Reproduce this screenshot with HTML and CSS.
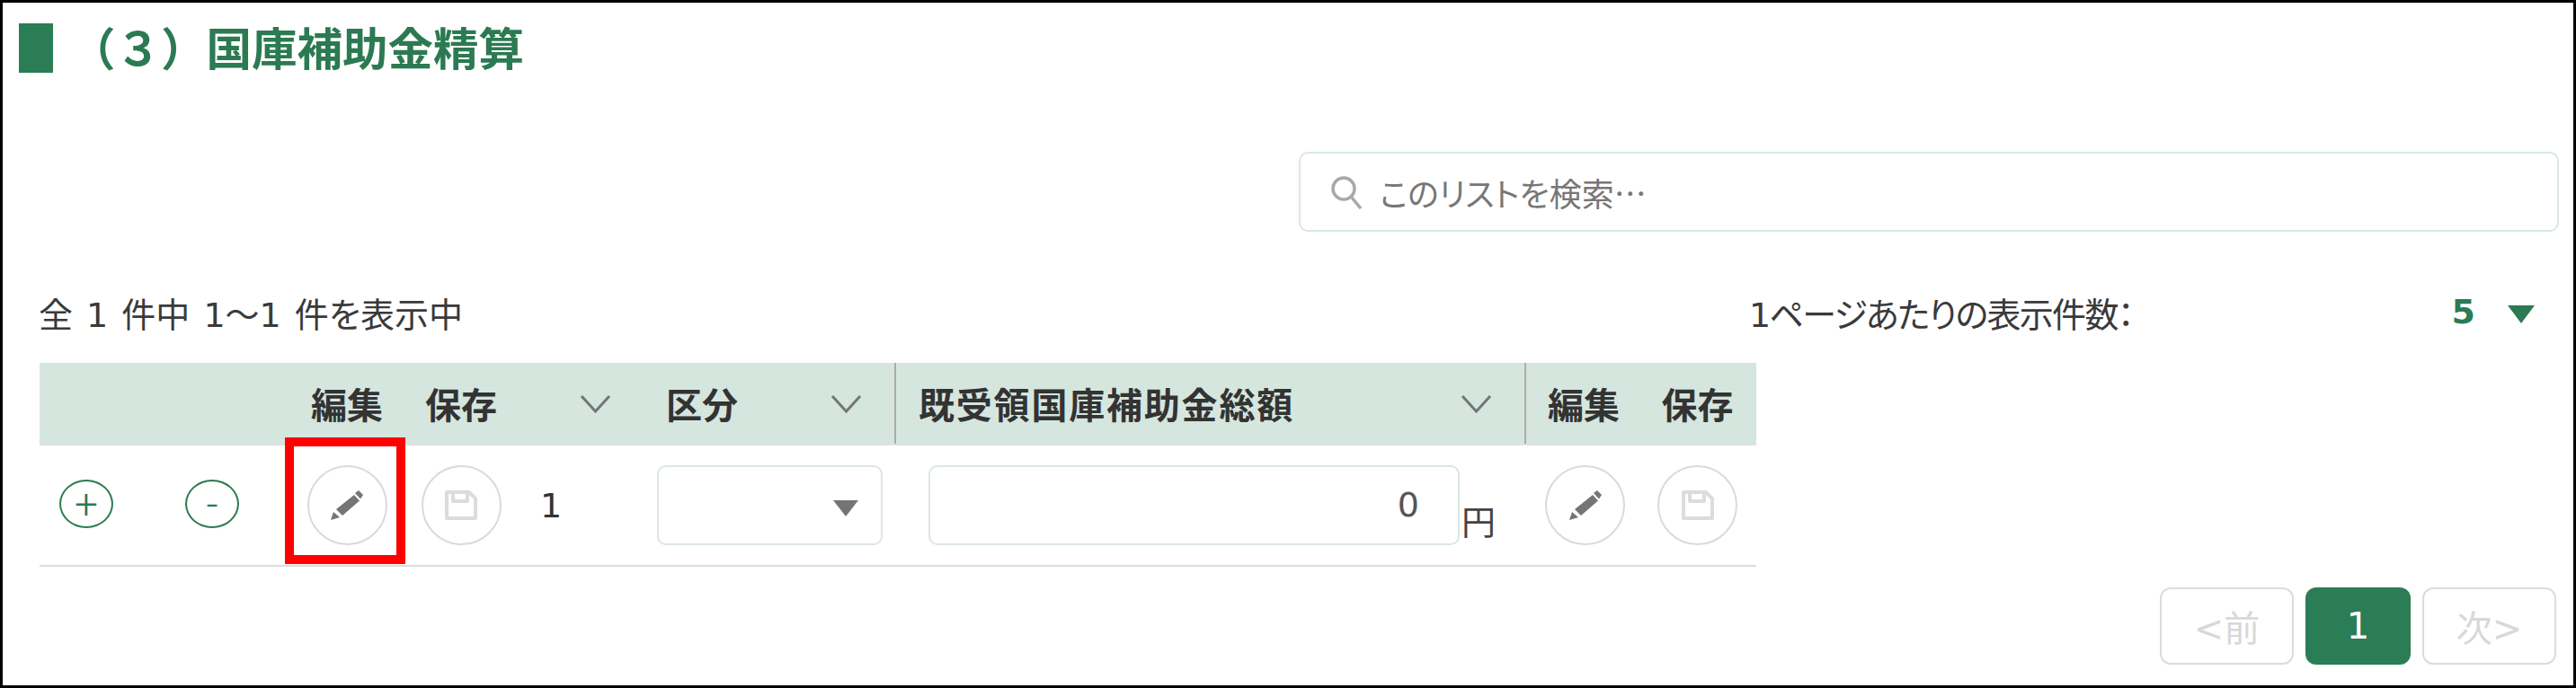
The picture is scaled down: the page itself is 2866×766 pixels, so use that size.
FILE: index.html
```html
<!DOCTYPE html>
<html lang="ja">
<head>
<meta charset="utf-8">
<title>国庫補助金精算</title>
<link rel="stylesheet" href="styles.css">
</head>
<body>
<main class="frame">
  <h2 class="title"><span class="title-mark"></span><span class="title-text">（３）国庫補助金精算</span></h2>

  <div class="search-row">
    <div class="search">
      <svg class="search-icon" viewBox="0 0 36 38"><circle cx="14" cy="15" r="12"/><path d="M23 25 L33 37"/></svg>
      <span>このリストを検索…</span>
    </div>
  </div>

  <div class="meta">
    <span class="meta-count">全 1 件中 1～1 件を表示中</span>
    <div class="per-page">
      <span class="per-page-label">1ページあたりの表示件数：</span>
      <div class="per-page-value"><span>5</span><i class="tri tri-green"></i></div>
    </div>
  </div>

  <table class="grid">
    <colgroup>
      <col class="c-plus"><col class="c-minus"><col class="c-edit"><col class="c-save"><col class="c-no"><col class="c-kind"><col class="c-amount"><col class="c-edit2"><col class="c-save2">
    </colgroup>
    <thead>
      <tr>
        <th></th>
        <th></th>
        <th class="center">編集</th>
        <th class="center">保存</th>
        <th><div class="th-sort th-sort-end"><svg class="chev" viewBox="0 0 35 21"><path d="M2 2 L17.500 19 L33 2"/></svg></div></th>
        <th><div class="th-sort"><span>区分</span><svg class="chev" viewBox="0 0 35 21"><path d="M2 2 L17.500 19 L33 2"/></svg></div></th>
        <th class="divided"><div class="th-sort"><span class="wide">既受領国庫補助金総額</span><svg class="chev" viewBox="0 0 35 21"><path d="M2 2 L17.500 19 L33 2"/></svg></div></th>
        <th class="divided center">編集</th>
        <th class="center last">保存</th>
      </tr>
    </thead>
    <tbody>
      <tr>
        <td><span class="oval">+</span></td>
        <td><span class="oval">-</span></td>
        <td class="edit-cell">
          <span class="round">
            <svg class="pencil" viewBox="0 0 36 33"><path d="M0 33 L3 24 L10 30 Z"/><path d="M6 21 L26 5 L32 11.500 L13 28 Z"/><path d="M27 3 L31 0 L36 5 L33 9.500 Z"/></svg>
          </span>
          <span class="highlight"></span>
        </td>
        <td>
          <span class="round">
            <svg class="floppy" viewBox="0 0 36 33"><path d="M2 2 H27 L34 9 V31 H2 Z"/><path d="M9 2 V12 H25 V2"/></svg>
          </span>
        </td>
        <td class="no">1</td>
        <td class="kind-cell"><div class="select"><i class="tri tri-grey"></i></div></td>
        <td class="amount-cell"><div class="amount"><div class="amount-box">0</div><span class="yen">円</span></div></td>
        <td class="edit2-cell">
          <span class="round">
            <svg class="pencil" viewBox="0 0 36 33"><path d="M0 33 L3 24 L10 30 Z"/><path d="M6 21 L26 5 L32 11.500 L13 28 Z"/><path d="M27 3 L31 0 L36 5 L33 9.500 Z"/></svg>
          </span>
        </td>
        <td class="last">
          <span class="round">
            <svg class="floppy" viewBox="0 0 36 33"><path d="M2 2 H27 L34 9 V31 H2 Z"/><path d="M9 2 V12 H25 V2"/></svg>
          </span>
        </td>
      </tr>
    </tbody>
  </table>

  <nav class="pager">
    <span class="page page-off">&lt;前</span>
    <span class="page page-on">1</span>
    <span class="page page-off">次&gt;</span>
  </nav>
</main>
</body>
</html>
```
FILE: styles.css
```css
* { box-sizing: border-box; }

html, body {
  margin: 0;
  padding: 0;
  background: #fff;
}

body {
  width: 2866px;
  height: 766px;
  overflow: hidden;
  font-family: "DejaVu Sans", "Noto Sans CJK JP", sans-serif;
  font-size: 38px;
  color: #3a3a3a;
  font-feature-settings: "palt";
}

.frame {
  width: 2866px;
  height: 766px;
  border: 3px solid #000;
  display: flex;
  flex-direction: column;
}

.title {
  margin: 23px 0 0 18px;
  height: 55px;
  display: flex;
  align-items: center;
  gap: 19px;
  font-family: "Noto Sans CJK JP", sans-serif;
  font-size: 50.500px;
  font-weight: 700;
  line-height: 55px;
  color: #2b7a52;
  font-feature-settings: normal;
}

.title-text { padding-bottom: 5px; }

.title-mark {
  width: 38px;
  height: 55px;
  background: #2b7d55;
}

.search-row {
  margin-top: 88px;
  padding-right: 16px;
  display: flex;
  justify-content: flex-end;
}

.search {
  width: 1402px;
  height: 89px;
  border: 2px solid #dbe8e2;
  border-radius: 10px;
  padding-left: 34px;
  display: flex;
  align-items: center;
  gap: 18px;
  font-family: "Noto Sans CJK JP", sans-serif;
  font-size: 36px;
  color: #777;
}

.search-icon {
  width: 36px;
  height: 38px;
  fill: none;
  stroke: #a8a8a8;
  stroke-width: 3.500;
}

.meta {
  height: 58px;
  margin-top: 60px;
  padding-left: 40px;
  display: flex;
  align-items: center;
  justify-content: space-between;
}

.meta-count { word-spacing: 3px; }

.per-page-label { letter-spacing: -1.700px; }

.per-page {
  width: 874px;
  margin-right: 43px;
  display: flex;
  align-items: center;
  justify-content: space-between;
}

.per-page-value {
  display: flex;
  align-items: center;
  gap: 36px;
  font-weight: 700;
  color: #2b7a52;
}

.tri {
  display: block;
  width: 0;
  height: 0;
  border-style: solid;
  border-color: transparent;
  border-bottom-width: 0;
}

.tri-green {
  margin-top: 6px;
  border-width: 20px 15px 0;
  border-top-color: #2b7a52;
}

.tri-grey {
  border-width: 18px 14px 0;
  border-top-color: #757575;
}

.grid {
  width: 1910px;
  margin: 28px 0 0 41px;
  table-layout: fixed;
  border-collapse: collapse;
}

.c-plus { width: 104px; }
.c-minus { width: 176px; }
.c-edit { width: 124px; }
.c-save { width: 130px; }
.c-no { width: 138px; }
.c-kind { width: 280px; }
.c-amount { width: 701px; }
.c-edit2 { width: 129px; }
.c-save2 { width: 128px; }

.grid th {
  height: 91px;
  padding: 0;
  background: #d5e6de;
  border-bottom: 2px solid #e0e0e0;
  font-family: "Noto Sans CJK JP", sans-serif;
  font-size: 40px;
  font-weight: 700;
  color: #333;
  text-align: left;
  font-feature-settings: normal;
}

.grid th.center { text-align: center; }

.grid th.divided {
  border-left: 2px solid #ababab;
}

.grid th.last,
.grid td.last { padding-right: 3px; }

.grid td.edit2-cell { padding-left: 4px; }

.th-sort {
  display: flex;
  align-items: center;
  justify-content: space-between;
  padding: 0 36px 0 25px;
}

.th-sort-end { justify-content: flex-end; }

.wide { letter-spacing: 1.800px; }

.chev {
  width: 35px;
  height: 21px;
  fill: none;
  stroke: #757575;
  stroke-width: 3;
}

.grid td {
  height: 135px;
  padding: 0;
  border-bottom: 2px solid #dcdcdc;
  text-align: center;
  vertical-align: middle;
}

.oval {
  display: inline-flex;
  align-items: center;
  justify-content: center;
  width: 60px;
  height: 54px;
  margin-bottom: 4px;
  border: 2px solid #2b7a52;
  border-radius: 50%;
  font-family: "Roboto", sans-serif;
  font-size: 46px;
  font-weight: 300;
  line-height: 1;
  color: #2b7a52;
  vertical-align: middle;
}

.round {
  display: inline-flex;
  align-items: center;
  justify-content: center;
  width: 89px;
  height: 89px;
  border: 2px solid #dadada;
  border-radius: 50%;
  vertical-align: middle;
}

.pencil {
  width: 36px;
  height: 33px;
  fill: #757575;
}

.floppy {
  width: 36px;
  height: 33px;
  fill: none;
  stroke: #dcdcdc;
  stroke-width: 4;
  stroke-linejoin: round;
}

.edit-cell { position: relative; }

.highlight {
  position: absolute;
  left: -7px;
  top: -9px;
  width: 134px;
  height: 141px;
  border: 10px solid #f00;
  pointer-events: none;
}

.grid td.no {
  padding-left: 23px;
  text-align: left;
  color: #333;
}

.grid td.kind-cell { padding-left: 15px; }

.select {
  width: 251px;
  height: 89px;
  border: 2px solid #dbe8e2;
  border-radius: 10px;
  display: flex;
  align-items: center;
  justify-content: flex-end;
  padding: 6px 25px 0 0;
}

.grid td.amount-cell { padding-left: 37px; }

.amount {
  display: flex;
  align-items: flex-start;
}

.amount-box {
  width: 591px;
  height: 89px;
  border: 2px solid #dbe8e2;
  border-radius: 10px;
  padding-right: 43px;
  text-align: right;
  line-height: 85px;
  color: #555;
}

.yen {
  margin: 36px 0 0 2px;
  font-family: "Noto Sans CJK JP", sans-serif;
  font-size: 38px;
  line-height: 1.300;
  color: #444;
}

.pager {
  margin-top: 23px;
  padding-right: 19px;
  display: flex;
  justify-content: flex-end;
  gap: 13px;
  font-size: 40px;
  font-feature-settings: normal;
}

.page {
  height: 86px;
  border-radius: 12px;
  display: flex;
  align-items: center;
  justify-content: center;
}

.page-off {
  width: 149px;
  border: 2px solid #dcdcdc;
  color: #d8d8d8;
}

.page-on {
  width: 117px;
  background: #2b7d55;
  color: #fff;
}
```
